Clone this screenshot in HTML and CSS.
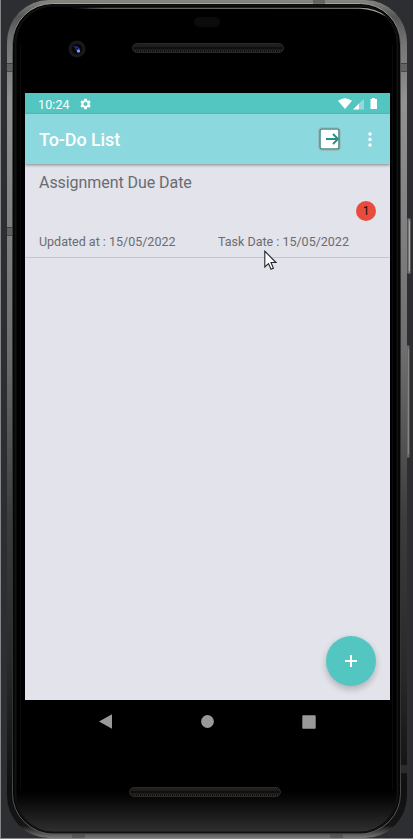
FILE: index.html
```html
<!DOCTYPE html>
<html lang="en">
<head>
<meta charset="utf-8">
<title>To-Do List</title>
<link rel="stylesheet" href="styles.css">
</head>
<body>
<div class="device">
  <svg class="frame" width="413" height="839" viewBox="0 0 413 839" aria-hidden="true">
    <defs>
      <linearGradient id="rail" x1="0" y1="0" x2="0" y2="1">
        <stop offset="0" stop-color="#85877f"/><stop offset=".02" stop-color="#555"/><stop offset=".05" stop-color="#747474"/><stop offset=".12" stop-color="#929292"/>
        <stop offset=".42" stop-color="#6e6e6e"/><stop offset=".62" stop-color="#3c3c3c"/>
        <stop offset=".8" stop-color="#292929"/><stop offset=".94" stop-color="#101010"/><stop offset=".985" stop-color="#151515"/><stop offset="1" stop-color="#777"/>
      </linearGradient>
      <linearGradient id="edge" x1="0" y1="0" x2="0" y2="1">
        <stop offset="0" stop-color="#a5a5a2"/><stop offset=".06" stop-color="#555"/><stop offset=".35" stop-color="#333"/><stop offset=".9" stop-color="#333"/><stop offset="1" stop-color="#666"/>
      </linearGradient>
      <linearGradient id="chin" x1="0" y1="0" x2="0" y2="1">
        <stop offset="0" stop-color="#000"/><stop offset=".95" stop-color="#000"/><stop offset=".961" stop-color="#090909"/><stop offset="1" stop-color="#303030"/>
      </linearGradient>
      <linearGradient id="shine" x1="0" y1="0" x2="1" y2="0">
        <stop offset="0" stop-color="#777" stop-opacity="0"/><stop offset=".12" stop-color="#83857f"/><stop offset=".9" stop-color="#8c8c88"/><stop offset="1" stop-color="#bbb"/>
      </linearGradient>
      <pattern id="mesh" width="4" height="8" patternUnits="userSpaceOnUse">
        <path d="M.5 1L2 3 .5 5 2 7M2.5 1L4 3 2.500 5 4 7" fill="none" stroke="#3c3a37" stroke-width=".7"/>
      </pattern>
    </defs>
    <rect width="413" height="839" fill="#2d2e32"/>
    <path d="M.5 0V839M0 838.5H413" stroke="#858787"/>
    <rect x="407" y="218" width="4" height="56" rx="1.5" fill="#777" stroke="#303332"/>
    <path d="M409.5 221V271" stroke="#a5a7a4"/>
    <rect x="406" y="345" width="4" height="113" rx="1.5" fill="#696a67" stroke="#303332"/>
    <path d="M408.5 349V454" stroke="#858682"/>
    <rect x="7" y="0" width="400" height="838" rx="42" ry="42" fill="url(#rail)"/>
    <rect x="12.5" y="3.5" width="388" height="830" rx="40" fill="#050505" stroke="url(#edge)"/>
    <rect x="15.5" y="5.5" width="382" height="827" rx="38" fill="url(#chin)" stroke="#111" stroke-width="2"/>
    <path d="M20.500 45V790M392.500 45V790" stroke="#0b0b0b"/>
    <path d="M65 7.700H360Q376 7.800 386 16.500Q374 9.200 360 8.700H90Z" fill="url(#shine)"/>
    <path d="M7 63H13V71H7ZM401 63H407V71H401ZM7 227H13V235H7ZM401 765H407V773H401ZM313 0H325V4H313ZM72 834H85V838H72ZM330 834H343V838H330Z" fill="#444" opacity=".5"/>
    <path d="M7 63.500H13M7 71.500H13M401 63.500H407M401 71.500H407M7 227.500H13M7 235.500H13" stroke="#333" opacity=".7"/>
    <rect x="194" y="17" width="26" height="10" rx="5" fill="#0b0b0b"/>
    <circle cx="77" cy="49" r="8.500" fill="#191919"/><circle cx="77" cy="49" r="5.300" fill="#070709"/>
    <path d="M74.500 46L76 49 78 51.500M76 46.500L79.500 49" stroke="#26399a" stroke-width="1.200" fill="none"/><circle cx="78.500" cy="51" r="1.700" fill="#8498ef"/>
    <rect x="132.500" y="43.500" width="151" height="9" rx="4.500" fill="#100f0e"/><rect x="132.500" y="43.500" width="151" height="9" rx="4.500" fill="url(#mesh)" stroke="#2b2a28"/>
    <rect x="129.500" y="787.500" width="151" height="9" rx="4.500" fill="#100f0e"/><rect x="129.500" y="787.500" width="151" height="9" rx="4.500" fill="url(#mesh)" stroke="#2b2a28"/>
  </svg>
  <div class="panel">
    <main class="screen">
      <div class="status">
        <span class="clock">10:24</span>
        <svg class="gear" width="12" height="12" viewBox="2 2 20 20"><path fill="#fff" fill-rule="evenodd" d="M19.400 13a7.700 7.700 0 0 0 0-2l2.100-1.600-2-3.500-2.500 1a7.400 7.400 0 0 0-1.700-1L15 3.200h-4.200l-.3 2.700a7.400 7.400 0 0 0-1.700 1l-2.500-1-2 3.500L6.400 11a7.700 7.700 0 0 0 0 2l-2.100 1.600 2 3.500 2.500-1a7.400 7.400 0 0 0 1.700 1l.3 2.700H15l.3-2.700a7.400 7.400 0 0 0 1.700-1l2.500 1 2-3.500ZM12.900 15.500a3.500 3.500 0 1 1 0-7 3.500 3.500 0 0 1 0 7Z"/></svg>
        <svg class="signals" width="41" height="12" viewBox="0 0 41 12"><path fill="#fff" d="M0 2.700Q7-2.300 14 2.700L7 11ZM15 11.500L21 5.500V11.500ZM32.500 1H34V0H37V1H39V11H32.500Z"/><path fill="#91d9de" d="M21 5.500L26 .8V11.500H21Z"/></svg>
      </div>
      <header class="appbar">
        <h1>To-Do List</h1>
        <svg class="exit" width="23" height="24" viewBox="0 0 23 24"><rect x="1.500" y="1.500" width="20" height="21" rx="2.500" fill="#fff" stroke="#9db5b4" stroke-width="2.400"/><rect x="2" y="2" width="19" height="20" rx="2" fill="none" stroke="#388f89" stroke-width="1.200"/><path d="M8 12H20M15 7L20 12 15 17" fill="none" stroke="#2b9188" stroke-width="2"/></svg>
        <svg class="more" width="4" height="15" viewBox="0 0 4 15"><g fill="#fff"><circle cx="2" cy="2" r="1.700"/><circle cx="2" cy="7.500" r="1.700"/><circle cx="2" cy="13" r="1.700"/></g></svg>
      </header>
      <section class="task">
        <h2>Assignment Due Date</h2>
        <span class="badge">1</span>
        <div class="dates"><span>Updated at : 15/05/2022</span><span class="due">Task Date : 15/05/2022</span></div>
      </section>
      <button class="add" aria-label="Add task"><svg width="12" height="12" viewBox="0 0 12 12"><path d="M6 0V12M0 6H12" stroke="#fff" stroke-width="1.900"/></svg></button>
    </main>
    <nav class="nav">
      <svg width="13" height="15" viewBox="0 0 13 15"><path d="M0 7.500L13 .3V14.700Z" fill="#999"/></svg>
      <svg width="13" height="13" viewBox="0 0 13 13"><circle cx="6.500" cy="6.500" r="6.400" fill="#999"/></svg>
      <svg width="14" height="14" viewBox="0 0 14 14"><rect x=".3" y=".3" width="13.400" height="13.400" rx=".7" fill="#999"/></svg>
    </nav>
  </div>
  <svg class="cursor" width="14" height="21" viewBox="0 0 14 21"><path d="M.8 1.200V17L4.500 13.600 7 19.200 9.400 18.200 7 12.500H12Z" fill="#fff" stroke="#20242e" stroke-width="1.100"/></svg>
</div>
</body>
</html>
```
FILE: styles.css
```css
* { box-sizing: border-box; }
body { margin: 0; font-family: Roboto, sans-serif; background: #2d2e32; }
svg { display: block; flex: none; }
h1, h2 { margin: 0; }
.device { position: relative; width: 413px; height: 839px; overflow: hidden; padding: 93px 23px 0 25px; }
.frame { position: absolute; inset: 0; }
.panel { position: relative; width: 365px; }
.screen { position: relative; height: 607px; background: #e2e3eb; overflow: hidden; }
.status { display: flex; height: 21px; align-items: center; padding: 0 13px; background: #54c6c1; color: #fff; }
.clock { font-size: 12.5px; line-height: 21px; letter-spacing: .1px; padding-top: 1px; width: 41px; }
.signals { margin-left: auto; margin-right: -2px; }
.appbar { position: relative; display: flex; height: 50px; align-items: center; padding: 0 18px 0 14px; color: #fff; background: #8bd8de; box-shadow: 0 1px 3px rgba(0,0,0,.42); }
.appbar h1 { font-size: 18px; font-weight: 500; line-height: 24px; letter-spacing: -.1px; margin-right: auto; padding-top: 2px; }
.exit { margin-right: 27px; }
.task { display: flex; flex-direction: column; height: 94px; padding: 9px 14px 0; border-bottom: 1px solid #c5c6cb; color: #6b6c70; }
.task h2 { font-size: 16px; font-weight: 400; line-height: 20px; letter-spacing: -.06px; }
.badge { align-self: flex-end; width: 20px; height: 20px; margin-top: 8px; border-radius: 50%; background: #e84c3d; color: #111; text-align: center; font-size: 12px; line-height: 20px; }
.dates { display: grid; grid-template-columns: 179px 1fr; margin-top: 13px; font-size: 12.5px; line-height: 16px; white-space: nowrap; }
.add { position: absolute; right: 14px; bottom: 14px; width: 50px; height: 50px; display: grid; place-items: center; padding: 0; border: 0; border-radius: 50%; background: #54c6c1; box-shadow: 0 4px 6px rgba(0,0,0,.17), 0 1px 8px rgba(0,0,0,.06); }
.nav { display: flex; height: 43px; justify-content: space-between; align-items: center; padding: 0 74px 0 74px; }
.cursor { position: absolute; left: 264px; top: 250px; }
```
